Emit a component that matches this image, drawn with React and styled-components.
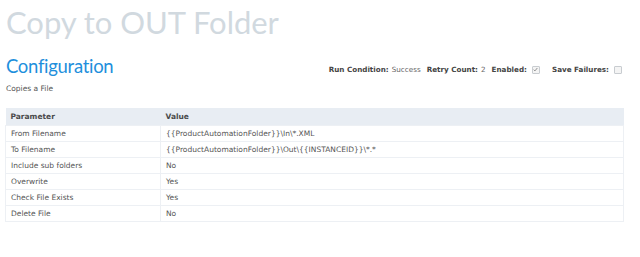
import React from "react";
import styled, { createGlobalStyle } from "styled-components";

const Global = createGlobalStyle`
  html, body { margin: 0; padding: 0; background: #fff; }
  body { font-family: "DejaVu Sans", Verdana, sans-serif; }
`;

const Page = styled.div`
  width: 640px;
  height: 257px;
  padding: 0 16px 0 5px;
  box-sizing: border-box;
  overflow: hidden;
`;

const Title = styled.h1`
  margin: 0;
  padding: 2px 0 0 1px;
  font-family: Lato, "Open Sans", sans-serif;
  font-weight: 400;
  font-size: 31px;
  line-height: 40px;
  letter-spacing: -0.05px;
  color: #d1d9df;
`;

const HeadRow = styled.div`
  display: flex;
  align-items: flex-end;
  justify-content: space-between;
  margin-top: 13px;
`;

const SubTitle = styled.h2`
  margin: 0;
  padding-left: 1px;
  font-family: Lato, "Open Sans", sans-serif;
  font-weight: 400;
  font-size: 18.5px;
  line-height: 23px;
  letter-spacing: -0.3px;
  color: #1e8fdc;
`;

const Meta = styled.div`
  display: flex;
  align-items: center;
  gap: 6px;
  font-size: 7.2px;
  color: #666;
  padding-bottom: 4px;
  margin-right: 2px;
`;

const MetaItem = styled.span`
  display: flex;
  align-items: center;
  gap: 3px;
  margin-left: ${(p) => p.$extra || 0}px;
`;

const Label = styled.b`
  color: #444;
  font-weight: 700;
`;

const Box = styled.span`
  width: 6px;
  height: 6px;
  border: 1px solid #c8ccd0;
  border-radius: 1px;
  background: #f4f4f4;
  display: inline-flex;
  align-items: center;
  justify-content: center;
  margin-left: 2px;
`;

const Desc = styled.div`
  font-size: 7.5px;
  color: #555;
  margin-top: 6px;
  padding-left: 1px;
`;

const Table = styled.table`
  margin-top: 15px;
  width: 619px;
  border-collapse: collapse;
  font-size: 7.5px;
  color: #555;
`;

const Th = styled.th`
  background: #e8edf3;
  text-align: left;
  font-weight: 700;
  color: #4a4a4a;
  height: 17px;
  padding: 0 5px;
  width: ${(p) => p.$w || "auto"};
`;

const Td = styled.td`
  height: 15px;
  padding: 0 5px;
  border: 1px solid #edf0f4;
`;

const rows = [
  ["From Filename", "{{ProductAutomationFolder}}\\In\\*.XML"],
  ["To Filename", "{{ProductAutomationFolder}}\\Out\\{{INSTANCEID}}\\*.*"],
  ["Include sub folders", "No"],
  ["Overwrite", "Yes"],
  ["Check File Exists", "Yes"],
  ["Delete File", "No"],
];

export default function App() {
  return (
    <Page>
      <Global />
      <Title>Copy to OUT Folder</Title>
      <HeadRow>
        <SubTitle>Configuration</SubTitle>
        <Meta>
          <MetaItem>
            <Label>Run Condition:</Label> Success
          </MetaItem>
          <MetaItem>
            <Label>Retry Count:</Label> 2
          </MetaItem>
          <MetaItem>
            <Label>Enabled:</Label>
            <Box>
              <svg width="5" height="5" viewBox="0 0 6 6">
                <path d="M0.8 3.2 L2.3 4.7 L5.2 1.2" fill="none" stroke="#888" strokeWidth="1.1" />
              </svg>
            </Box>
          </MetaItem>
          <MetaItem $extra={6}>
            <Label>Save Failures:</Label>
            <Box />
          </MetaItem>
        </Meta>
      </HeadRow>
      <Desc>Copies a File</Desc>
      <Table>
        <thead>
          <tr>
            <Th $w="145px">Parameter</Th>
            <Th>Value</Th>
          </tr>
        </thead>
        <tbody>
          {rows.map(([k, v]) => (
            <tr key={k}>
              <Td>{k}</Td>
              <Td>{v}</Td>
            </tr>
          ))}
        </tbody>
      </Table>
    </Page>
  );
}
